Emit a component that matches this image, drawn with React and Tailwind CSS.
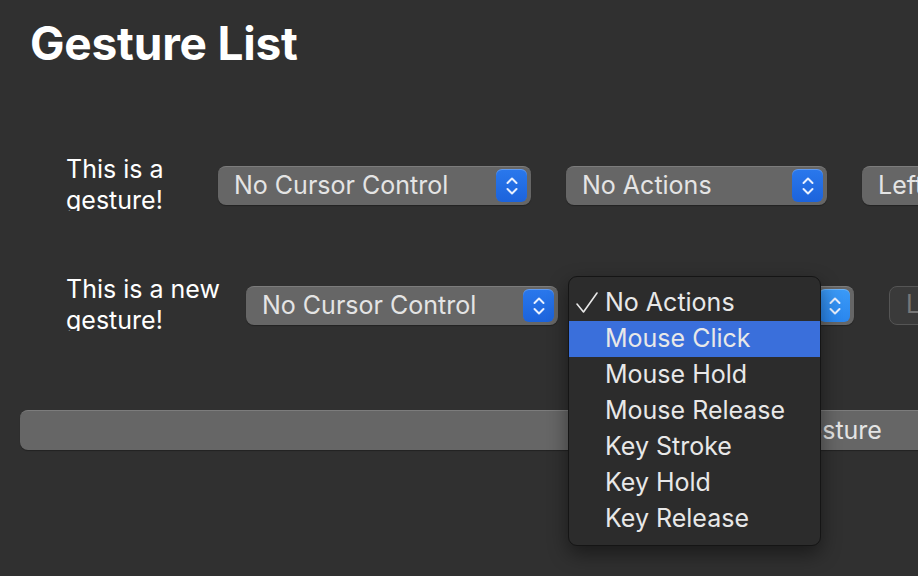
import React from "react";

const Stepper = ({ light }) => (
  <div
    className={`w-[31px] h-[33px] rounded-[6px] flex items-center justify-center shadow-[inset_0_1px_0_rgba(255,255,255,0.25)] ${
      light ? "bg-gradient-to-b from-[#3a9af7] to-[#2a86ee]" : "bg-gradient-to-b from-[#2a78ec] to-[#1c63dc]"
    }`}
  >
    <svg width="14" height="22" viewBox="0 0 14 22" fill="none" stroke="#e8f0ff" strokeWidth="2" strokeLinecap="round" strokeLinejoin="round">
      <path d="M2.5 8 L7 3.5 L11.5 8" />
      <path d="M2.5 14 L7 18.5 L11.5 14" />
    </svg>
  </div>
);

const Popup = ({ label, width, light, disabled }) => (
  <div
    className={`h-[39px] shrink-0 rounded-[8px] flex items-center justify-between pl-[16px] pr-[4px] ${
      disabled
        ? "bg-[#3a3a3a] border border-[#555] text-[#777]"
        : "bg-[#666666] border-t border-[#7c7c7c] text-[#e4e4e4] shadow-[0_1px_1px_rgba(0,0,0,0.3)]"
    }`}
    style={{ width }}
  >
    <span className="text-[25px] whitespace-nowrap">{label}</span>
    {!disabled && <Stepper light={light} />}
  </div>
);

const Row = ({ title, labelWidth, children }) => (
  <div className="flex items-center pl-[66px] gap-[35px] h-[54px]">
    <div
      className="h-[57px] overflow-hidden text-[25px] leading-[31px] text-white shrink-0 mr-[-16px] -mt-[6px]"
      style={{ width: labelWidth }}
    >
      {title}
    </div>
    {children}
  </div>
);

const items = [
  "No Actions",
  "Mouse Click",
  "Mouse Hold",
  "Mouse Release",
  "Key Stroke",
  "Key Hold",
  "Key Release",
];

const App = () => {
  return (
    <div
      className="w-[918px] h-[576px] bg-[#303030] overflow-hidden relative"
      style={{ fontFamily: "Inter, 'Noto Sans', sans-serif" }}
    >
      <h1 className="pl-[30px] pt-[15px] text-[46px] font-bold text-white leading-[56px] tracking-[-0.2px]">
        Gesture List
      </h1>

      <div className="mt-[87px] flex flex-col gap-[66px]">
        <Row title="This is a gesture!" labelWidth="133px">
          <Popup label="No Cursor Control" width="313px" />
          <Popup label="No Actions" width="261px" />
          <Popup label="Left Click" width="261px" />
        </Row>

        <div className="relative">
          <Row title="This is a new gesture!" labelWidth="161px">
            <Popup label="No Cursor Control" width="312px" />
            <Popup label="No Actions" width="261px" light />
            <Popup label="Left Click" width="261px" disabled />
          </Row>

          {/* open menu */}
          <div className="absolute left-[568px] top-[-2px] w-[253px] bg-[#2c2c2c] border border-[#151515] rounded-[9px] py-[8px] shadow-[0_8px_20px_rgba(0,0,0,0.45)] z-10">
            {items.map((item, i) => (
              <div
                key={item}
                className={`h-[36px] flex items-center text-[25px] text-[#e8e8e8] ${
                  i === 1 ? "bg-[#3a6fdb]" : ""
                }`}
              >
                <div className="w-[36px] flex justify-end pr-[6px]">
                  {i === 0 && (
                    <svg width="24" height="24" viewBox="0 0 24 24" fill="none" stroke="#e8e8e8" strokeWidth="1.6" strokeLinecap="round" strokeLinejoin="round">
                      <path d="M2 13 L8.5 21 L22 2" />
                    </svg>
                  )}
                </div>
                <span className="whitespace-nowrap">{item}</span>
              </div>
            ))}
          </div>
        </div>
      </div>

      <div className="mt-[78px] pl-[20px]">
        <div className="w-[1576px] h-[40px] rounded-[8px] bg-[#666666] border-t border-[#7c7c7c] shadow-[0_1px_1px_rgba(0,0,0,0.3)] flex items-center justify-center text-[25px] text-[#e4e4e4]">
          Add Gesture
        </div>
      </div>
    </div>
  );
};

export default App;
